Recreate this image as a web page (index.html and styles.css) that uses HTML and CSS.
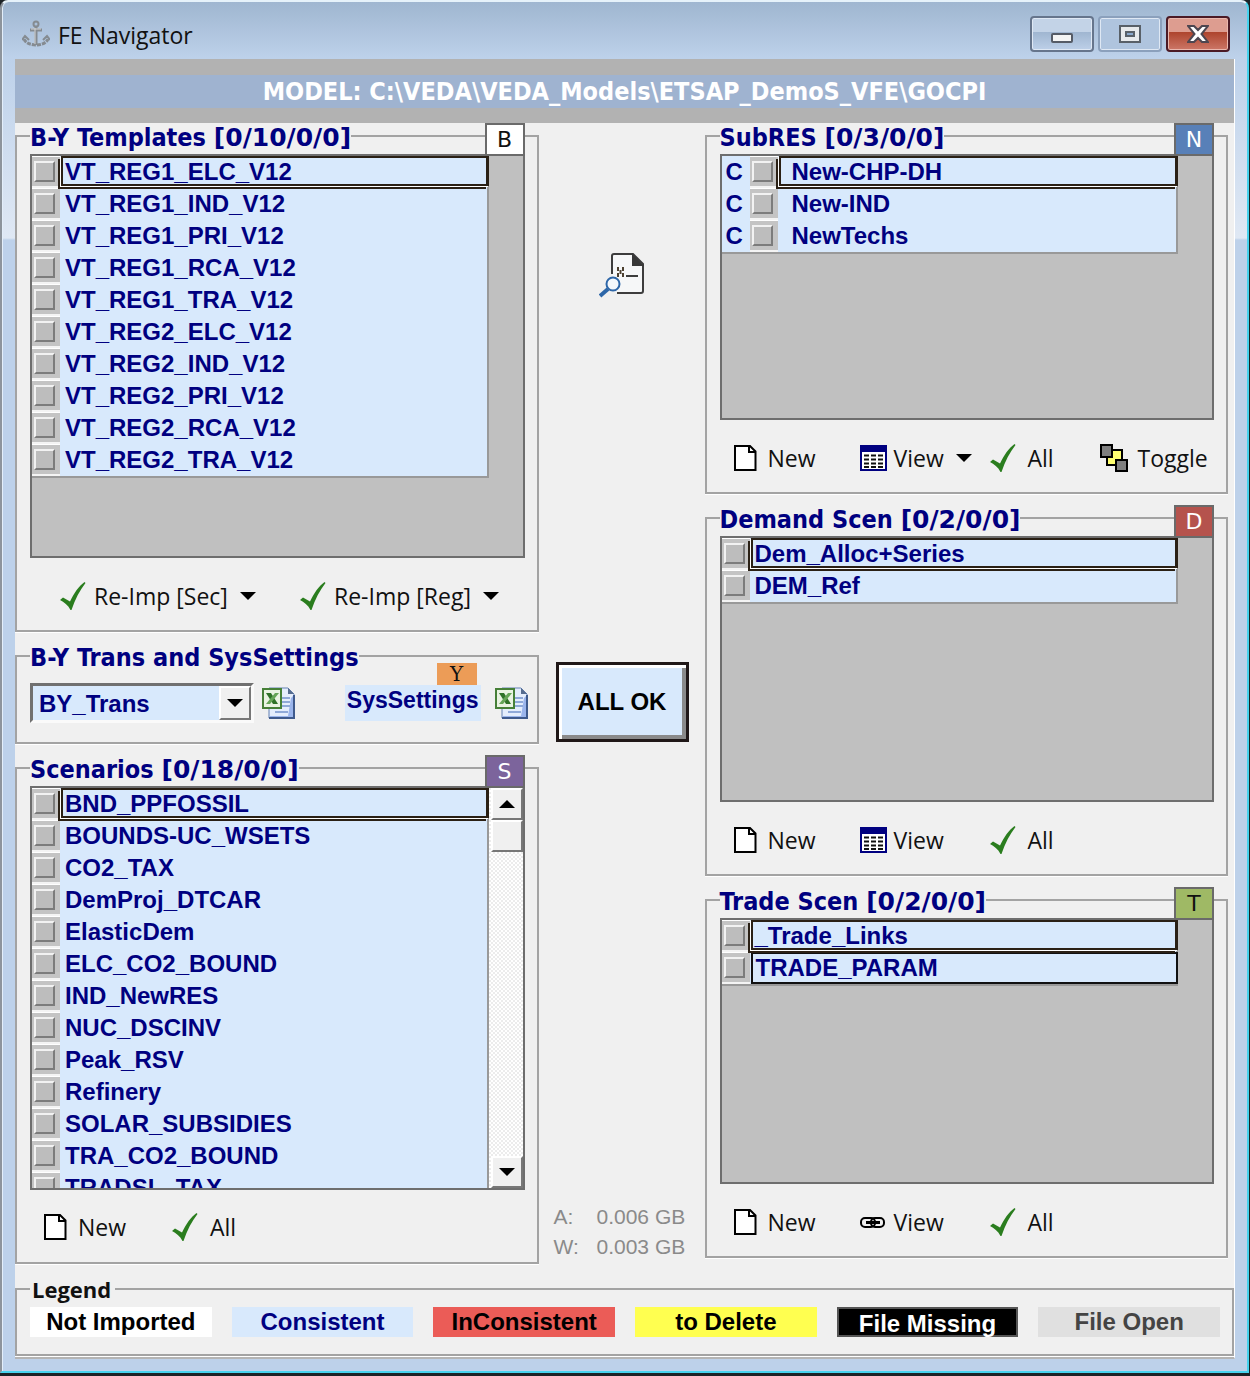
FILE: index.html
```html
<!DOCTYPE html>
<html lang="en">
<head>
<meta charset="utf-8">
<title>FE Navigator</title>
<link rel="stylesheet" href="styles.css">
</head>
<body>
<svg class="defs" aria-hidden="true">
  <symbol id="i-check" viewBox="0 0 28 28"><path d="M0 18L3 15.500L10 19.500C14 11 19 4 24.500 0L25.500 1C20 8 15 17 11.500 28H10.500C8 23 4 20 0 18Z" fill="#2a7d1e"/></symbol>
  <symbol id="i-new" viewBox="0 0 28 28"><path d="M1 2H16L21.500 7.500V26H1Z" fill="#fff" stroke="#000" stroke-width="2"/><path d="M15 2V8H21" fill="none" stroke="#000" stroke-width="2"/></symbol>
  <symbol id="i-table" viewBox="0 0 28 28"><path d="M1 2H26V26H1Z" fill="#fff" stroke="#000080" stroke-width="2"/><path d="M0 1H27V8H0Z" fill="#000080"/><path d="M4 11.500H24M4 15.500H24M4 19.500H24M4 23H24" stroke="#111" stroke-width="2" stroke-dasharray="5 2"/></symbol>
  <symbol id="i-toggle" viewBox="0 0 28 28"><path d="M7 6H22V21H7Z" fill="#ffff70" stroke="#000" stroke-width="2"/><path d="M1 1H12V13H1Z" fill="#808080" stroke="#000" stroke-width="2"/><path d="M16 16H27V27H16Z" fill="#808080" stroke="#000" stroke-width="2"/></symbol>
  <symbol id="i-link" viewBox="0 0 28 28"><g fill="none" stroke="#000" stroke-width="2"><rect x="1" y="10" width="14" height="9" rx="4"/><rect x="11" y="10" width="13" height="9" rx="4"/><path d="M6 14.500H20" stroke-width="3"/></g></symbol>
  <symbol id="i-excel" viewBox="0 0 34 34"><path d="M7 2H26L32 8V32H7Z" fill="#e4edfc" stroke="#6482b4" stroke-width="1"/><path d="M29 12L32 9V32H8V30H26Z" fill="#9bb5ec"/><path d="M7 32H32V9" fill="none" stroke="#3f5a8c" stroke-width="2"/><path d="M26 2V8H32Z" fill="#566c8f"/><path d="M20 12H28M20 16H28M20 20H28M13 26H26" stroke="#8fa9d8" stroke-width="2"/><path d="M1 3H19V22H1Z" fill="#e9f3e2" stroke="#468038" stroke-width="2"/><path d="M4 7H9L16 18H11Z" fill="#2f7228"/><path d="M13 7H17L8 18H4Z" fill="#65a557"/></symbol>
</svg>

<main class="window">
  <header class="titlebar">
    <svg class="anchor" viewBox="0 0 28 28" fill="none"><g stroke="#858b91" stroke-width="3"><circle cx="14" cy="4" r="2.500" stroke-width="2"/><path d="M14 7V25M8 10H20"/><path d="M2 19C5 27 23 27 26 19" stroke-dasharray="4 1"/><path d="M0 20L3 16L7 20M21 20L25 16L28 20" stroke-width="2"/></g><path d="M13 8V24M9 9H19" stroke="#d3d4d5" stroke-width="1"/></svg>
    <h1>FE Navigator</h1>
    <div class="window-buttons">
      <button type="button" aria-label="Minimize"><svg viewBox="0 0 22 22"><rect x="1" y="11" width="20" height="8" rx="1" fill="#f4f4f4" stroke="#555b66" stroke-width="2"/></svg></button>
      <button type="button" class="dim" aria-label="Maximize"><svg viewBox="0 0 22 22"><path d="M1 3H21V19H1Z" fill="#e8eaec" stroke="#596068" stroke-width="2"/><path d="M7 9H15V13H7Z" fill="#8aa8cc" stroke="#596068" stroke-width="2"/></svg></button>
      <button type="button" class="close" aria-label="Close"><svg viewBox="0 0 22 22"><path d="M1 3H7L11 7L15 3H21L14.500 11L21 19H15L11 15L7 19H1L7.500 11Z" fill="#fff" stroke="#4d4650" stroke-width="2"/></svg></button>
    </div>
  </header>

  <div class="client">
    <div class="model"><p>MODEL: C:\VEDA\VEDA_Models\ETSAP_DemoS_VFE\GOCPI</p></div>

    <div class="columns">
      <div class="column">
        <fieldset class="group">
          <legend>B-Y Templates <span class="count">[0/10/0/0]</span></legend>
          <span class="badge badge-b">B</span>
          <div class="list tall">
            <ul class="rows">
              <li class="current"><span class="pick"><input type="checkbox" id="b1"></span><label for="b1">VT_REG1_ELC_V12</label></li>
              <li><span class="pick"><input type="checkbox" id="b2"></span><label for="b2">VT_REG1_IND_V12</label></li>
              <li><span class="pick"><input type="checkbox" id="b3"></span><label for="b3">VT_REG1_PRI_V12</label></li>
              <li><span class="pick"><input type="checkbox" id="b4"></span><label for="b4">VT_REG1_RCA_V12</label></li>
              <li><span class="pick"><input type="checkbox" id="b5"></span><label for="b5">VT_REG1_TRA_V12</label></li>
              <li><span class="pick"><input type="checkbox" id="b6"></span><label for="b6">VT_REG2_ELC_V12</label></li>
              <li><span class="pick"><input type="checkbox" id="b7"></span><label for="b7">VT_REG2_IND_V12</label></li>
              <li><span class="pick"><input type="checkbox" id="b8"></span><label for="b8">VT_REG2_PRI_V12</label></li>
              <li><span class="pick"><input type="checkbox" id="b9"></span><label for="b9">VT_REG2_RCA_V12</label></li>
              <li><span class="pick"><input type="checkbox" id="b10"></span><label for="b10">VT_REG2_TRA_V12</label></li>
            </ul>
          </div>
          <div class="tools reimport">
            <button type="button"><svg class="icon"><use href="#i-check"/></svg>Re-Imp [Sec]<i class="arrow"></i></button>
            <button type="button"><svg class="icon"><use href="#i-check"/></svg>Re-Imp [Reg]<i class="arrow"></i></button>
          </div>
        </fieldset>

        <fieldset class="group">
          <legend>B-Y Trans and SysSettings</legend>
          <div class="settings">
            <div class="combo">
              <select aria-label="B-Y Trans"><option>BY_Trans</option></select>
              <span class="combo-button"><i class="arrow"></i></span>
            </div>
            <button type="button" class="excel" aria-label="Open BY_Trans"><svg><use href="#i-excel"/></svg></button>
            <div class="sys">SysSettings<span class="sys-badge">Y</span></div>
            <button type="button" class="excel" aria-label="Open SysSettings"><svg><use href="#i-excel"/></svg></button>
          </div>
        </fieldset>

        <fieldset class="group">
          <legend>Scenarios <span class="count">[0/18/0/0]</span></legend>
          <span class="badge badge-s">S</span>
          <div class="list tall">
            <ul class="rows">
              <li class="current"><span class="pick"><input type="checkbox" id="s1"></span><label for="s1">BND_PPFOSSIL</label></li>
              <li><span class="pick"><input type="checkbox" id="s2"></span><label for="s2">BOUNDS-UC_WSETS</label></li>
              <li><span class="pick"><input type="checkbox" id="s3"></span><label for="s3">CO2_TAX</label></li>
              <li><span class="pick"><input type="checkbox" id="s4"></span><label for="s4">DemProj_DTCAR</label></li>
              <li><span class="pick"><input type="checkbox" id="s5"></span><label for="s5">ElasticDem</label></li>
              <li><span class="pick"><input type="checkbox" id="s6"></span><label for="s6">ELC_CO2_BOUND</label></li>
              <li><span class="pick"><input type="checkbox" id="s7"></span><label for="s7">IND_NewRES</label></li>
              <li><span class="pick"><input type="checkbox" id="s8"></span><label for="s8">NUC_DSCINV</label></li>
              <li><span class="pick"><input type="checkbox" id="s9"></span><label for="s9">Peak_RSV</label></li>
              <li><span class="pick"><input type="checkbox" id="s10"></span><label for="s10">Refinery</label></li>
              <li><span class="pick"><input type="checkbox" id="s11"></span><label for="s11">SOLAR_SUBSIDIES</label></li>
              <li><span class="pick"><input type="checkbox" id="s12"></span><label for="s12">TRA_CO2_BOUND</label></li>
              <li><span class="pick"><input type="checkbox" id="s13"></span><label for="s13">TRADSL_TAX</label></li>
            </ul>
            <div class="scrollbar">
              <button type="button" aria-label="Scroll up"><i class="arrow up"></i></button>
              <div class="thumb"></div>
              <button type="button" class="down" aria-label="Scroll down"><i class="arrow"></i></button>
            </div>
          </div>
          <div class="tools">
            <button type="button"><svg class="icon"><use href="#i-new"/></svg>New</button>
            <button type="button" class="spaced"><svg class="icon"><use href="#i-check"/></svg>All</button>
          </div>
        </fieldset>
      </div>

      <div class="middle">
        <button type="button" class="inspect" aria-label="Inspect"><svg viewBox="0 0 46 46"><path d="M13 22V4Q13 2 15 2H34L44 12V39Q44 41 42 41H18" fill="#f6f7f8" stroke="#3d3d3d" stroke-width="2"/><path d="M33 1V14H45Z" fill="#383838"/><path d="M19 15V19M24 15V19M21.500 18V22M19 21V25M24 21V25" stroke="#4c4030" stroke-width="2"/><path d="M27 24H39" stroke="#3d3d3d" stroke-width="2"/><circle cx="14" cy="32" r="6.500" fill="#f4f8fc" stroke="#2d66a8" stroke-width="2"/><path d="M9 37L1 44" stroke="#2d66a8" stroke-width="4"/></svg></button>
        <button type="button" class="all-ok">ALL OK</button>
        <dl class="memory">
          <dt>A:</dt><dd>0.006 GB</dd>
          <dt>W:</dt><dd>0.003 GB</dd>
        </dl>
      </div>

      <div class="column">
        <fieldset class="group">
          <legend>SubRES <span class="count">[0/3/0/0]</span></legend>
          <span class="badge badge-n">N</span>
          <div class="list">
            <ul class="rows coded">
              <li class="current"><span class="code">C</span><span class="pick"><input type="checkbox" id="n1"></span><label for="n1">New-CHP-DH</label></li>
              <li><span class="code">C</span><span class="pick"><input type="checkbox" id="n2"></span><label for="n2">New-IND</label></li>
              <li><span class="code">C</span><span class="pick"><input type="checkbox" id="n3"></span><label for="n3">NewTechs</label></li>
            </ul>
          </div>
          <div class="tools wide">
            <button type="button"><svg class="icon"><use href="#i-new"/></svg>New</button>
            <button type="button"><svg class="icon"><use href="#i-table"/></svg>View<i class="arrow"></i></button>
            <button type="button" class="spaced"><svg class="icon"><use href="#i-check"/></svg>All</button>
            <button type="button" class="spaced"><svg class="icon"><use href="#i-toggle"/></svg>Toggle</button>
          </div>
        </fieldset>

        <fieldset class="group">
          <legend>Demand Scen <span class="count">[0/2/0/0]</span></legend>
          <span class="badge badge-d">D</span>
          <div class="list">
            <ul class="rows">
              <li class="current"><span class="pick"><input type="checkbox" id="d1"></span><label for="d1">Dem_Alloc+Series</label></li>
              <li><span class="pick"><input type="checkbox" id="d2"></span><label for="d2">DEM_Ref</label></li>
            </ul>
          </div>
          <div class="tools wide">
            <button type="button"><svg class="icon"><use href="#i-new"/></svg>New</button>
            <button type="button"><svg class="icon"><use href="#i-table"/></svg>View</button>
            <button type="button" class="spaced"><svg class="icon"><use href="#i-check"/></svg>All</button>
          </div>
        </fieldset>

        <fieldset class="group">
          <legend>Trade Scen <span class="count">[0/2/0/0]</span></legend>
          <span class="badge badge-t">T</span>
          <div class="list">
            <ul class="rows">
              <li class="current"><span class="pick"><input type="checkbox" id="t1"></span><label for="t1">_Trade_Links</label></li>
              <li class="boxed"><span class="pick"><input type="checkbox" id="t2"></span><label for="t2">TRADE_PARAM</label></li>
            </ul>
          </div>
          <div class="tools wide">
            <button type="button"><svg class="icon"><use href="#i-new"/></svg>New</button>
            <button type="button"><svg class="icon"><use href="#i-link"/></svg>View</button>
            <button type="button" class="spaced"><svg class="icon"><use href="#i-check"/></svg>All</button>
          </div>
        </fieldset>
      </div>
    </div>

    <fieldset class="group key">
      <legend>Legend</legend>
      <ul class="chips">
        <li class="not-imported">Not Imported</li>
        <li class="consistent">Consistent</li>
        <li class="inconsistent">InConsistent</li>
        <li class="to-delete">to Delete</li>
        <li class="missing">File Missing</li>
        <li class="open">File Open</li>
      </ul>
    </fieldset>
  </div>
</main>
</body>
</html>
```

FILE: styles.css
```css
* { box-sizing: border-box; }

body {
  margin: 0;
  background: #1c2226;
  font-family: "Liberation Sans", Arial, sans-serif;
  font-size: 24px;
  color: #000080;
}

button, select, input { font: inherit; color: inherit; margin: 0; padding: 0; border: 0; background: none; }
ul, dl, dd, p, h1 { margin: 0; padding: 0; list-style: none; }
svg { display: block; }
.defs { display: none; }

.window {
  margin: 0 1px 2px 0;
  padding: 0 12px 12px 13px;
  border: 2px solid #46d3ee;
  border-top-color: #e6f2fa;
  border-left-color: #8d949c;
  border-radius: 8px 8px 0 0;
  box-shadow: inset 1px 0 #e3eefa;
  background: linear-gradient(#9fb6d0, #bdd1ea 56px, #dfe8f4 236px, #bdd1ea 238px);
}

/* Title bar */
.titlebar {
  display: flex;
  align-items: center;
  height: 57px;
  padding: 7px 5px 0 7px;
  gap: 8px;
}
.titlebar h1 { flex: 1; padding-top: 2px; font: 400 23px/32px "Open Sans", sans-serif; color: #111; }
.anchor { width: 28px; height: 28px; }
.window-buttons { display: flex; gap: 4px; }
.window-buttons button {
  display: grid;
  place-items: center;
  width: 64px;
  height: 36px;
  border: 2px solid #66758c;
  border-radius: 4px;
  box-shadow: inset 0 0 0 1px #dfe8f4;
  background: linear-gradient(#c3d3e7 45%, #a0b6d1 45%, #bdd0e8);
}
.window-buttons svg { width: 22px; height: 22px; }
.window-buttons .dim { border-color: #8ba0bc; background: #afc4de; }
.window-buttons .close {
  border-color: #4b1a25;
  box-shadow: inset 0 0 0 1px #eab8ae;
  background: linear-gradient(#dd9d90 45%, #ae452e 45%, #cc7767);
}

/* Client area */
.client { background: #f0f0f0; border-right: 1px solid #fff; padding-bottom: 1px; border-bottom: 2px solid #b4b4b4; }
.model { padding: 16px 0 15px; background: #b2b2b2; }
.model p {
  background: #9fb3d0;
  color: #fff;
  text-align: center;
  font: 700 25px/33px "DejaVu Sans Condensed", "DejaVu Sans", sans-serif;
}

.columns { display: grid; grid-template-columns: 1fr 166px 1fr; padding-right: 6px; }
.column { display: flex; flex-direction: column; gap: 11px; min-width: 0; }

.group {
  position: relative;
  min-width: 0;
  margin: 0;
  padding: 5px 12px 0 13px;
  border: 2px solid #a3a3a3;
  box-shadow: 0 1px #fff;
}
.group legend {
  padding: 4px 0 0;
  font: 700 25px/22px "DejaVu Sans Condensed", "DejaVu Sans", sans-serif;
}
.group .count { font-family: "DejaVu Sans", sans-serif; }
.badge {
  position: absolute;
  top: -26px;
  right: 12px;
  width: 40px;
  height: 33px;
  border: 2px solid #6a6a6a;
  text-align: center;
  font: 400 22px/29px "DejaVu Sans", sans-serif;
  color: #fff;
}
.badge-b { background: #fff; color: #111; }
.badge-n { background: #5880b8; }
.badge-d { background: #b5534d; }
.badge-s { background: #7c649c; }
.badge-t { background: #9fb965; color: #111; }

/* Lists */
.list {
  display: flex;
  height: 266px;
  border: 2px solid #6e6e6e;
  background: #c0c0c0;
  overflow: hidden;
}
.list.tall { height: 404px; }
.rows { flex: 1; align-self: flex-start; margin-right: 34px; border-right: 2px solid #999; border-bottom: 2px solid #999; background: #d8e9fc; }
.rows:has(+ .scrollbar) { margin-right: 0; }
.rows li { display: flex; height: 32px; }
.rows label { flex: 1; margin-left: 1px; padding-left: 4px; line-height: 32px; font-weight: 700; }
.pick {
  width: 28px;
  padding: 4px 0 0 2px;
  background: #c4c4c4;
  border-top: 1px solid #fff;
  border-bottom: 2px solid #f4f4f4;
}
.pick input {
  display: block;
  appearance: none;
  width: 21px;
  height: 21px;
  border: 2px solid #f2f2f2;
  border-right-color: #7c7c7c;
  border-bottom-color: #7c7c7c;
  background: #bdbdbd;
}
.pick input:checked { background: #000080; }
.current label {
  position: relative;
  height: 30px;
  margin-right: -2px;
  padding-left: 2px;
  border: 2px solid #2a2015;
  border-right-width: 3px;
  line-height: 28px;
  background: #d8e9fc;
  box-shadow: -1px 1px #fff, -3px 3px #2a2015;
}
.boxed label {
  margin-right: -2px;
  padding-left: 3px;
  border: 2px solid #111;
  line-height: 28px;
}
.code { width: 28px; padding-left: 4px; font-weight: 700; line-height: 32px; }
.coded .current label { padding-left: 11px; }
.coded label { padding-left: 13px; }

.scrollbar {
  display: flex;
  flex-direction: column;
  width: 34px;
  padding-left: 2px;
  background: repeating-conic-gradient(#fff 0 25%, #ececec 0 50%) 0 0 / 4px 4px;
}
.scrollbar button, .thumb, .combo-button {
  display: grid;
  place-items: center;
  height: 32px;
  border: 2px solid #fff;
  border-right-color: #777;
  border-bottom-color: #777;
  background: #f0f0f0;
}
.scrollbar .down { margin-top: auto; }

.arrow { width: 0; border: 8px solid transparent; border-bottom: 0; border-top-color: #000; }
.arrow.up { border: 8px solid transparent; border-top: 0; border-bottom-color: #000; }

/* Tool rows under the lists */
.tools {
  display: grid;
  grid-template-columns: 128px 1fr;
  height: 72px;
  padding: 2px 0 0 14px;
  align-items: center;
}
.tools.reimport { grid-template-columns: 240px 1fr; padding-left: 30px; padding-top: 4px; }
.tools.wide { grid-template-columns: 126px 130px 110px 1fr; padding-top: 4px; }
.tools button {
  display: flex;
  align-items: center;
  gap: 6px;
  font: 400 23px/32px "Open Sans", sans-serif;
  color: #111;
  white-space: nowrap;
}
.tools .spaced { gap: 10px; }
.tools .arrow { margin-left: 6px; }
.icon { width: 28px; height: 28px; }

/* B-Y Trans and SysSettings */
.settings { display: flex; align-items: center; padding: 9px 0 19px; margin-right: -4px; }
.combo { position: relative; width: 224px; margin-right: 8px; }
.combo select {
  display: block;
  appearance: none;
  width: 100%;
  height: 40px;
  padding-left: 6px;
  border: 3px solid #707070;
  border-right-color: #fafafa;
  border-bottom-color: #fafafa;
  border-radius: 0;
  background: #d8e9fc;
  font-weight: 700;
}
.combo-button { position: absolute; top: 3px; right: 3px; width: 32px; height: 34px; pointer-events: none; }
.excel svg { width: 34px; height: 34px; }
.sys {
  position: relative;
  height: 36px;
  margin: 0 14px 0 auto;
  padding: 0 2px;
  background: #d8e9fc;
  font: 700 23px/30px "Liberation Sans", Arial, sans-serif;
}
.sys-badge {
  position: absolute;
  right: 4px;
  bottom: 100%;
  width: 40px;
  background: #ec9c57;
  color: #111;
  text-align: center;
  font: 400 20px/22px "DejaVu Serif", serif;
}

/* Middle column */
.middle { display: flex; flex-direction: column; }
.inspect { align-self: center; margin-top: 129px; }
.inspect svg { width: 46px; height: 46px; }
.all-ok {
  height: 80px;
  margin: 364px 16px 0 17px;
  border: 3px solid #201818;
  box-shadow: inset 3px 3px #fff, inset -4px -4px #8a8a8a;
  background: #d8e9fc;
  color: #000;
  font-weight: 700;
}
.memory {
  display: grid;
  grid-template-columns: 43px 1fr;
  margin: auto 0 2px 15px;
  font-size: 21px;
  line-height: 30px;
  color: #8a8a8a;
  white-space: nowrap;
}

/* Legend */
.key { margin-top: 12px; padding: 5px 12px 17px 13px; }
.key legend { padding: 0 4px 0 2px; font: 700 22px/26px "Open Sans", sans-serif; color: #111; }
.chips { display: grid; grid-template-columns: repeat(6, 1fr); gap: 20px; }
.chips li { height: 30px; line-height: 30px; text-align: center; font-weight: 700; white-space: nowrap; }
.not-imported { background: #fff; color: #000; }
.consistent { background: #d8e9fc; }
.inconsistent { background: #eb5c57; color: #000; }
.to-delete { background: #ffff50; color: #000; }
.missing { border: 2px solid #555; background: #000; color: #fff; }
.open { background: #e0e0e0; color: #444; }
```
